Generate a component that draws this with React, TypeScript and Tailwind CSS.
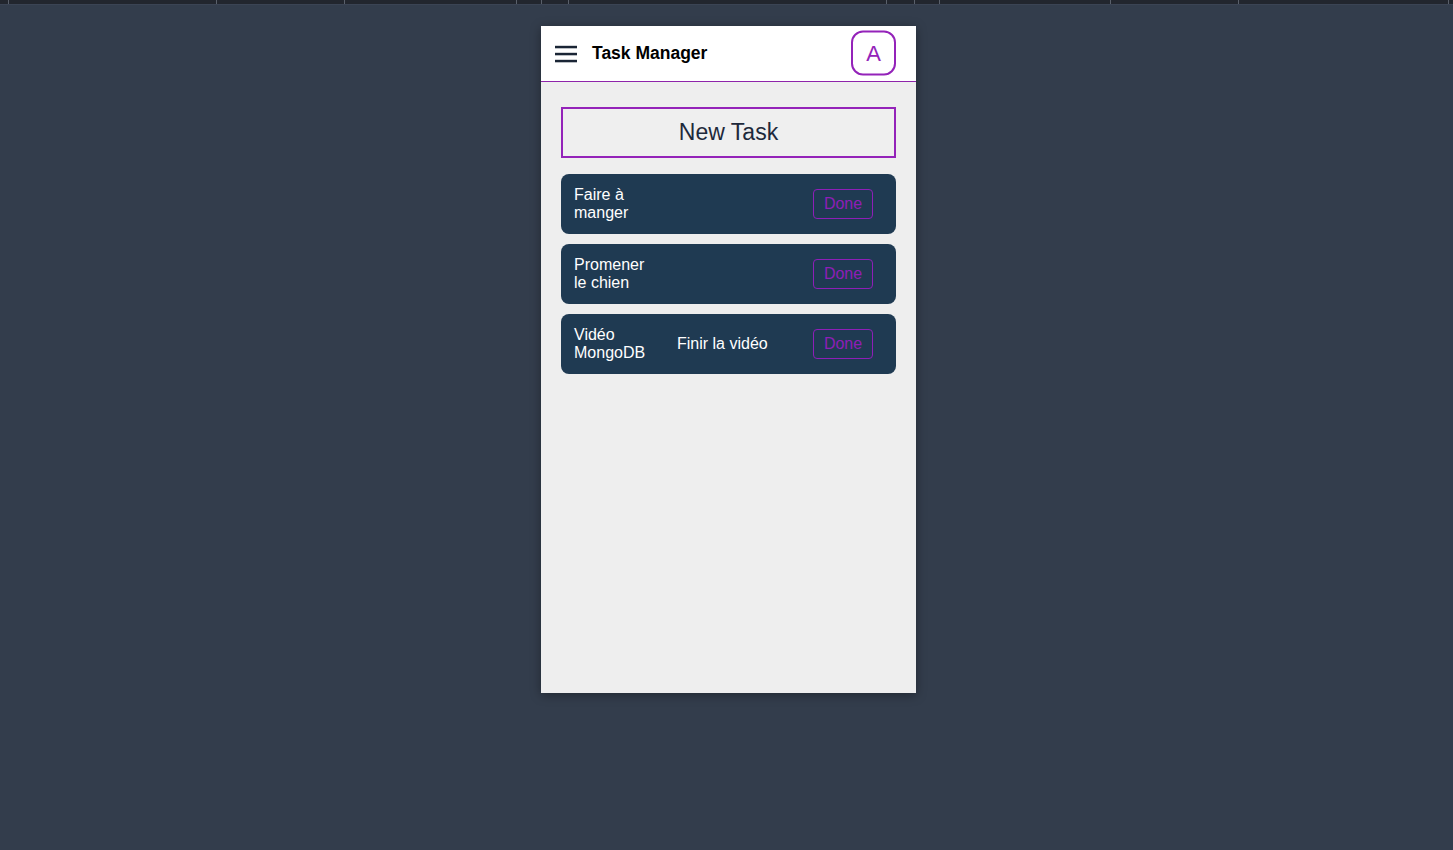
import React from "react";

const ticks = [9, 217, 345, 517, 542, 569, 887, 915, 940, 1111, 1239, 1449];

const tasks = [
  { title: "Faire à manger", desc: "" },
  { title: "Promener le chien", desc: "" },
  { title: "Vidéo MongoDB", desc: "Finir la vidéo" },
];

export default function App() {
  const segs: number[] = [];
  let prev = 0;
  for (const t of ticks) {
    segs.push(t - prev);
    prev = t;
  }
  return (
    <div
      className="min-h-[850px] w-full bg-[#333d4c]"
      style={{ fontFamily: '"Liberation Sans", Arial, sans-serif' }}
    >
      <div className="flex h-[5px] w-full bg-[#22262e] border-b border-[#3b4454]">
        {segs.map((w, i) => (
          <div
            key={i}
            className="h-[4px] shrink-0 border-r border-[#5a606b]"
            style={{ width: w }}
          />
        ))}
      </div>
      <div className="flex justify-center pl-1 pt-[21px]">
        <div className="flex h-[667px] w-[375px] flex-col bg-[#eeeeee] shadow-[0_2px_10px_rgba(0,0,0,0.35)]">
          <header className="flex h-[56px] items-center border-b border-[#8e24aa] bg-white pl-[14px] pr-[20px]">
            <svg width="22" height="18" viewBox="0 0 22 18" className="shrink-0">
              <rect x="0" y="0.8" width="22" height="2.5" fill="#1a2535" />
              <rect x="0" y="7.8" width="22" height="2.5" fill="#1a2535" />
              <rect x="0" y="14.8" width="22" height="2.5" fill="#1a2535" />
            </svg>
            <div className="ml-[15px] text-[17.5px] font-bold text-black">Task Manager</div>
            <div className="ml-auto flex h-[45px] w-[45px] -translate-y-[0.5px] items-center justify-center rounded-[12px] border-2 border-[#9423b9] text-[22px] text-[#9423b9]">
              A
            </div>
          </header>
          <main className="flex flex-col px-5 pt-[25px]">
            <button className="h-[51px] w-full border-2 border-[#9423b9] bg-[#efefef] text-[23px] text-[#1e293b]">
              New Task
            </button>
            <div className="mt-4 flex flex-col gap-[10px]">
              {tasks.map((t) => (
                <div
                  key={t.title}
                  className="flex h-[60px] items-center rounded-lg bg-[#1f3a52] pl-[13px] pr-[23px] text-[16px] leading-[18px] text-white"
                >
                  <div className="w-[103px] shrink-0 pr-[20px]">{t.title}</div>
                  <div className="flex-1">{t.desc}</div>
                  <button className="h-[30px] w-[60px] rounded border border-[#8e1eb8] text-[16px] text-[#8e1eb8]">
                    Done
                  </button>
                </div>
              ))}
            </div>
          </main>
        </div>
      </div>
    </div>
  );
}
